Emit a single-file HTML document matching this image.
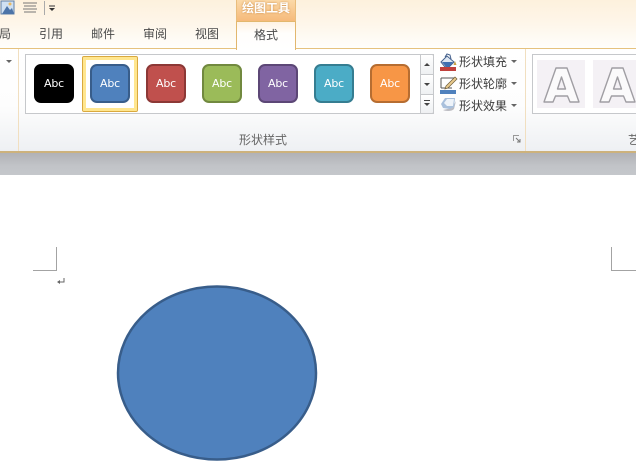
<!DOCTYPE html>
<html><head><meta charset="utf-8">
<style>
html,body{margin:0;padding:0;background:#fff}
#p{position:relative;width:636px;height:463px;overflow:hidden;background:#fff;font-family:"Liberation Sans","Noto Sans CJK SC",sans-serif;filter:blur(.3px)}
#p div,#p span{position:absolute}
.t{font-size:12px;color:#4a4a4a;line-height:16px;white-space:nowrap}
.sw{top:64px;width:36px;height:35px;border:2px solid;border-radius:7px;color:#fff;font:11px/35px "DejaVu Sans",sans-serif;text-align:center;letter-spacing:-.2px}
.m{font-size:12px;color:#3c3c3c;line-height:14px;left:459px;white-space:nowrap}
.tri{width:0;height:0;border-left:3px solid transparent;border-right:3px solid transparent;border-top:3px solid #666}
.sb{background:linear-gradient(#fff,#eef0f2);border:1px solid #c6c8cb;box-sizing:border-box}
.wa{top:60px;width:48px;height:48px;background:#f4f1f5}
</style></head><body>
<div id="p">
<div style="left:0;top:0;width:636px;height:48px;background:linear-gradient(#fdf1dd,#fef6ea 50%,#fffefb)"></div>
<div style="left:0;top:48px;width:636px;height:1px;background:#e6c27e"></div>
<div style="left:0;top:49px;width:636px;height:102px;background:linear-gradient(#fff 0,#fdfdfd 55%,#eef0f3 100%)"></div>
<div style="left:0;top:151px;width:636px;height:2px;background:#cdb27c"></div>
<div style="left:0;top:153px;width:636px;height:22px;background:linear-gradient(#b1b2b6,#c2c4c8 60%,#c4c7cb)"></div>
<div style="left:18px;top:49px;width:1px;height:102px;background:#f1dfc0"></div>
<div style="left:525px;top:49px;width:1px;height:102px;background:#f1dfc0"></div>

<!-- quick access -->
<svg style="position:absolute;left:0;top:0" width="60" height="18">
<rect x="1" y="1" width="13" height="13" fill="#cfe0f2" stroke="#5f7fa8"/>
<path d="M2 14L7 6l3 4 2-2 2 6z" fill="#4c74a8"/><circle cx="10" cy="4" r="1.500" fill="#e8b860"/>
<path d="M23 3h14M24 6h12M23 9h14M24 12h12" stroke="#777" stroke-width="1"/>
<path d="M44.500 1v14" stroke="#aaa"/>
<path d="M49 6h6" stroke="#333"/><path d="M49 8h6l-3 3z" fill="#333"/>
</svg>

<!-- tabs -->
<div style="left:236px;top:0;width:60px;height:22px;background:linear-gradient(#fbd9a8,#f5b878);border-left:1px solid #e9bd7c;border-right:1px solid #e9bd7c;box-sizing:border-box"></div>
<div class="t" style="left:242px;top:0;font-size:12px;font-weight:bold;color:#fff;text-shadow:0 0 2px #c98a45">绘图工具</div>
<div style="left:236px;top:21px;width:60px;height:29px;background:linear-gradient(#fff3e4,#fffefc 40%,#fff);border:1px solid #e2b76e;border-bottom:none;box-sizing:border-box"></div>
<div class="t" style="left:0;top:26px;width:11px;overflow:hidden;direction:rtl">局</div>
<div class="t" style="left:39px;top:26px">引用</div>
<div class="t" style="left:91px;top:26px">邮件</div>
<div class="t" style="left:143px;top:26px">审阅</div>
<div class="t" style="left:195px;top:26px">视图</div>
<div class="t" style="left:254px;top:27px">格式</div>

<div class="tri" style="left:6px;top:60px"></div>

<!-- gallery -->
<div style="left:25px;top:54px;width:409px;height:60px;background:#fff;border:1px solid #c6c8cb;box-sizing:border-box"></div>
<div style="left:82px;top:56px;width:56px;height:56px;box-sizing:border-box;border:1px solid #d9a93e;border-radius:2px;background:#fff;box-shadow:inset 0 0 0 3px #ffe68f"></div>
<div class="sw" style="left:34px;background:#000;border-color:#000">Abc</div>
<div class="sw" style="left:90px;background:#4f81bd;border-color:#385d8a">Abc</div>
<div class="sw" style="left:146px;background:#c0504d;border-color:#8c3836">Abc</div>
<div class="sw" style="left:202px;background:#9bbb59;border-color:#71893f">Abc</div>
<div class="sw" style="left:258px;background:#8064a2;border-color:#5c4776">Abc</div>
<div class="sw" style="left:314px;background:#4bacc6;border-color:#357d91">Abc</div>
<div class="sw" style="left:370px;background:#f79646;border-color:#b66d31">Abc</div>

<div class="sb" style="left:420px;top:54px;width:14px;height:21px;border-radius:0 2px 0 0"></div>
<div class="sb" style="left:420px;top:74px;width:14px;height:21px"></div>
<div class="sb" style="left:420px;top:94px;width:14px;height:20px;border-radius:0 0 2px 0"></div>
<div class="tri" style="left:424px;top:63px;border-top:none;border-bottom:3px solid #444"></div>
<div class="tri" style="left:424px;top:83px;border-top-color:#444"></div>
<div style="left:424px;top:100px;width:6px;height:1px;background:#444"></div>
<div class="tri" style="left:424px;top:103px;border-top-color:#444"></div>

<!-- shape buttons -->
<svg style="position:absolute;left:438px;top:53px" width="20" height="62">
<path d="M3 9l6-6 7 6-5 5H7z" fill="#dfe8f3" stroke="#44608c"/><path d="M7 4l2-3 3 1 1 4" fill="none" stroke="#44608c"/>
<path d="M4 9h11l-4 5H8z" fill="#3f6fb0"/><path d="M17 8l1.500 4h-3z" fill="#c8a040"/>
<rect x="2" y="14" width="16" height="4" fill="#c0403c"/>
<path d="M3 25h13M3 25v10M3 35h11" fill="none" stroke="#555"/>
<path d="M8 33l9-9 2 2-9 9-3 1z" fill="#e8c98c" stroke="#6b5a38" stroke-width=".7"/>
<rect x="2" y="37" width="16" height="4" fill="#4f81bd"/>
<path d="M5 57c2 1 8 2 11-1l2-8-4 7z" fill="#bcbcc2"/>
<path d="M3 51l4-6h10l-1 9-4 2-7-1z" fill="#a9c0dc"/>
<path d="M6 50l3-4h7l-1 7-6 0z" fill="#eef3f9"/>
</svg>
<div class="m" style="top:55px">形状填充</div>
<div class="m" style="top:77px">形状轮廓</div>
<div class="m" style="top:99px">形状效果</div>
<div class="tri" style="left:511px;top:60px"></div>
<div class="tri" style="left:511px;top:82px"></div>
<div class="tri" style="left:511px;top:104px"></div>

<!-- group label -->
<div class="t" style="left:239px;top:132px;color:#666">形状样式</div>
<svg style="position:absolute;left:513px;top:135px" width="9" height="9"><path d="M.5 6V.5H6" fill="none" stroke="#999"/><path d="M3 3l4 4M7 4v3H4" fill="none" stroke="#777"/></svg>

<!-- wordart -->
<div style="left:532px;top:54px;width:110px;height:60px;background:#fff;border:1px solid #c6c8cb;box-sizing:border-box"></div>
<div class="wa" style="left:537px"></div>
<div class="wa" style="left:593px"></div>
<svg style="position:absolute;left:537px;top:60px" width="99" height="48">
<g fill="#fbfafb" stroke="#a09ea3" stroke-width="1.400" stroke-linejoin="round">
<path fill-rule="evenodd" d="M19 8h11l12 34H33l-2.500-6h-12L16 42H7zM24.500 17l-4 12h8z"/>
<path fill-rule="evenodd" d="M75 8h11l12 34H89l-2.500-6h-12L72 42H63zM80.500 17l-4 12h8z"/>
</g>
</svg>
<div class="t" style="left:628px;top:132px;color:#666">艺</div>

<!-- document -->
<svg style="position:absolute;left:0;top:175px" width="636" height="288">
<path d="M56.500 72v23.500H33M611.500 72v23.500H636" fill="none" stroke="#a3a3a3"/>
<path d="M64 103v4h-5" fill="none" stroke="#666"/><path d="M60 105l-3 2 3 2z" fill="#666"/>
<ellipse cx="217" cy="198" rx="99" ry="86.500" fill="#4f81bd" stroke="#385d8a" stroke-width="2.500"/>
</svg>
</div>
</body></html>
